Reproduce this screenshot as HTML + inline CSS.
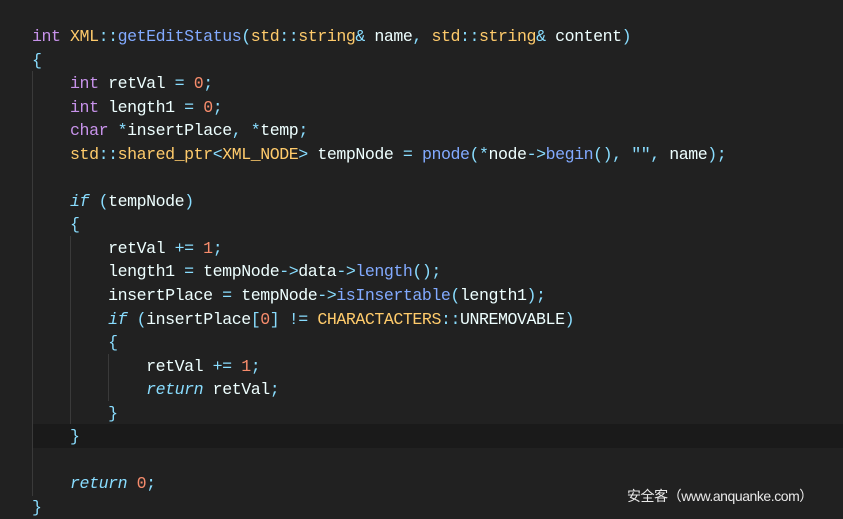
<!DOCTYPE html>
<html><head><meta charset="utf-8"><style>
html,body{margin:0;padding:0;}
body{width:843px;height:516px;overflow:hidden;background:#212121;position:relative;font-family:"Liberation Mono",monospace;font-size:16.6px;letter-spacing:-0.45px;}
.code{position:absolute;left:32px;top:25px;}
.l{height:23.55px;line-height:23.55px;white-space:pre;color:#eeffff;}
.k{color:#c792ea}.f{color:#82aaff}.o{color:#89ddff}.n{color:#f78c6c}.t{color:#ffcb6b}.i{color:#89ddff;font-style:italic}
.hl{position:absolute;left:32px;top:424px;width:811px;height:24px;background:#1a1a1a;}
.g{position:absolute;width:1px;background:#3a3a3a;}
.wm{position:absolute;left:627px;top:486px;color:#e8e8e8;font-family:"Liberation Sans","Noto Sans CJK SC",sans-serif;font-size:14px;}
</style></head><body>
<div class="hl"></div>
<div class="g" style="left:32px;top:71px;height:425px"></div>
<div class="g" style="left:70px;top:236px;height:188px"></div>
<div class="g" style="left:108px;top:354px;height:47px"></div>
<div class="code">
<div class="l"><span class="k">int</span> <span class="t">XML</span><span class="o">::</span><span class="f">getEditStatus</span><span class="o">(</span><span class="t">std</span><span class="o">::</span><span class="t">string</span><span class="o">&amp;</span> name<span class="o">,</span> <span class="t">std</span><span class="o">::</span><span class="t">string</span><span class="o">&amp;</span> content<span class="o">)</span></div>
<div class="l"><span class="o">{</span></div>
<div class="l">    <span class="k">int</span> retVal <span class="o">=</span> <span class="n">0</span><span class="o">;</span></div>
<div class="l">    <span class="k">int</span> length1 <span class="o">=</span> <span class="n">0</span><span class="o">;</span></div>
<div class="l">    <span class="k">char</span> <span class="o">*</span>insertPlace<span class="o">,</span> <span class="o">*</span>temp<span class="o">;</span></div>
<div class="l">    <span class="t">std</span><span class="o">::</span><span class="t">shared_ptr</span><span class="o">&lt;</span><span class="t">XML_NODE</span><span class="o">&gt;</span> tempNode <span class="o">=</span> <span class="f">pnode</span><span class="o">(*</span>node<span class="o">-&gt;</span><span class="f">begin</span><span class="o">(),</span> <span class="o">""</span><span class="o">,</span> name<span class="o">);</span></div>
<div class="l"> </div>
<div class="l">    <span class="i">if</span> <span class="o">(</span>tempNode<span class="o">)</span></div>
<div class="l">    <span class="o">{</span></div>
<div class="l">        retVal <span class="o">+=</span> <span class="n">1</span><span class="o">;</span></div>
<div class="l">        length1 <span class="o">=</span> tempNode<span class="o">-&gt;</span>data<span class="o">-&gt;</span><span class="f">length</span><span class="o">();</span></div>
<div class="l">        insertPlace <span class="o">=</span> tempNode<span class="o">-&gt;</span><span class="f">isInsertable</span><span class="o">(</span>length1<span class="o">);</span></div>
<div class="l">        <span class="i">if</span> <span class="o">(</span>insertPlace<span class="o">[</span><span class="n">0</span><span class="o">]</span> <span class="o">!=</span> <span class="t">CHARACTACTERS</span><span class="o">::</span>UNREMOVABLE<span class="o">)</span></div>
<div class="l">        <span class="o">{</span></div>
<div class="l">            retVal <span class="o">+=</span> <span class="n">1</span><span class="o">;</span></div>
<div class="l">            <span class="i">return</span> retVal<span class="o">;</span></div>
<div class="l">        <span class="o">}</span></div>
<div class="l">    <span class="o">}</span></div>
<div class="l"> </div>
<div class="l">    <span class="i">return</span> <span class="n">0</span><span class="o">;</span></div>
<div class="l"><span class="o">}</span></div>
</div>
<div class="wm">安全客（www.anquanke.com）</div>
</body></html>
